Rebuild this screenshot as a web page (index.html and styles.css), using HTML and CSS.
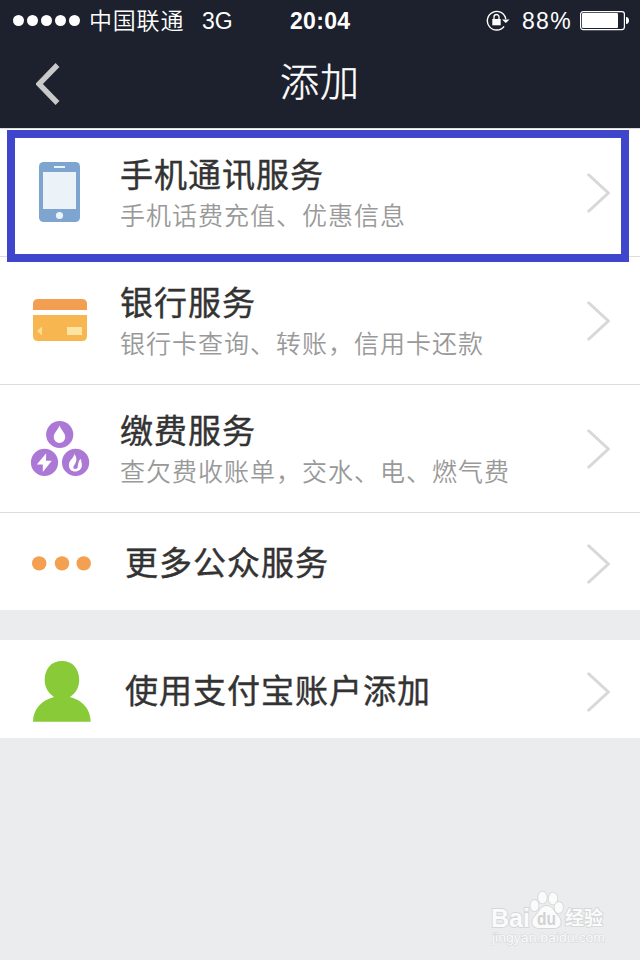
FILE: index.html
```html
<!DOCTYPE html>
<html lang="zh-CN">
<head>
<meta charset="utf-8">
<title>添加</title>
<link rel="stylesheet" href="styles.css">
</head>
<body>
<svg class="defs" width="0" height="0"><symbol id="chevron" viewBox="0 0 24 42"><path d="M1.8 2 22.3 21 1.8 40" fill="none" stroke="#d8d8d8" stroke-width="3"/></symbol></svg>
<div class="screen">
  <header class="header">
    <div class="status">
      <div class="signal"><i></i><i></i><i></i><i></i><i></i></div>
      <span class="carrier">中国联通</span>
      <span class="network">3G</span>
      <span class="time">20:04</span>
      <svg class="lock" width="24" height="22" viewBox="0 0 24 22"><path d="M18.1 16.300A9.300 9.300 0 1 1 19.800 9" fill="none" stroke="#fff" stroke-width="1.400"/><path d="M16 9.400h7.500L19.800 13z" fill="#fff"/><rect x="6.300" y="9" width="8.400" height="6.300" fill="#fff"/><path d="M8 9.200V7a2.500 2.500 0 0 1 5 0v2.200" fill="none" stroke="#fff" stroke-width="1.300"/></svg>
      <span class="percent">88%</span>
      <svg class="battery" width="50" height="20" viewBox="0 0 50 20"><rect x=".6" y=".6" width="43.800" height="18" rx="2.500" fill="none" stroke="#fff" stroke-width="1.200"/><rect x="2" y="2" width="36" height="15" rx="1" fill="#fff"/><path d="M46 6c4 0 4 7 0 7z" fill="#fff"/></svg>
    </div>
    <nav class="nav">
      <svg class="back" width="24" height="42" viewBox="0 0 24 42"><path d="M21.500 2 3 21 21.500 40" fill="none" stroke="#c9c9c9" stroke-width="5.400"/></svg>
      <h1>添加</h1>
    </nav>
  </header>
  <main>
    <section class="row featured">
      <svg class="icon" width="64" height="64" viewBox="0 0 64 64"><rect x="11" y="2" width="41" height="60" rx="4.500" fill="#7da5cf"/><rect x="15" y="12" width="33" height="37" fill="#ebf3f8"/><rect x="26" y="6" width="11" height="2" fill="#ebf3f8"/><circle cx="31.500" cy="55.500" r="3.600" fill="#ebf3f8"/></svg>
      <div class="copy"><h2>手机通讯服务</h2><p>手机话费充值、优惠信息</p></div>
      <svg class="arrow"><use href="#chevron"/></svg>
    </section>
    <section class="row">
      <svg class="icon" width="64" height="64" viewBox="0 0 64 64"><path d="M5 22v-6q0-5 5-5h44q5 0 5 5v6z" fill="#f29f51"/><path d="M5 27h54v21q0 5-5 5H10q-5 0-5-5z" fill="#f7b650"/><path d="m9 43 5-4.500v9z" fill="#fbdd94"/><rect x="39" y="39" width="15" height="8" fill="#fde4a2"/></svg>
      <div class="copy"><h2>银行服务</h2><p>银行卡查询、转账，信用卡还款</p></div>
      <svg class="arrow"><use href="#chevron"/></svg>
    </section>
    <section class="row">
      <svg class="icon" width="64" height="64" viewBox="0 0 64 64"><g fill="#ab78d6"><circle cx="31.700" cy="18.500" r="13.600"/><circle cx="16.500" cy="46.400" r="13.600"/><circle cx="47.600" cy="46.400" r="13.600"/></g><g fill="#fff"><path d="M31.500 9.500c2 5.300 5.800 7.300 5.800 11.600a5.800 5.800 0 0 1-11.600 0c0-4.300 3.800-6.300 5.800-11.600z"/><path d="M18.200 37.200 8.800 48.400h6v7.600l9-11.200h-5.800z"/><path d="M46.400 37.500c-.5 5-5.500 6.500-5.500 11.500 0 4.500 3 6.500 6 6.500 4 0 7-2.500 7-6.500 0-2.500-1-3.500-.8-6-3 1-2.300 4.500-3.300 6.500.5 2-.8 3.500-2.500 3.500-2 0-2.500-1.800-1.300-3.500 3-4 3.400-8-.1-12z"/></g></svg>
      <div class="copy"><h2>缴费服务</h2><p>查欠费收账单，交水、电、燃气费</p></div>
      <svg class="arrow"><use href="#chevron"/></svg>
    </section>
    <section class="row compact">
      <svg class="icon" width="64" height="64" viewBox="0 0 64 64" fill="#f3a051"><circle cx="11.200" cy="33.400" r="7.200"/><circle cx="34" cy="33.400" r="7.200"/><circle cx="55.700" cy="33.400" r="7.200"/></svg>
      <h2>更多公众服务</h2>
      <svg class="arrow"><use href="#chevron"/></svg>
    </section>
    <section class="row compact account">
      <svg class="icon" width="64" height="64" viewBox="0 0 64 64" fill="#89ca39"><path d="M34 3c11 0 17.200 8 17.200 19 0 8-4 13.500-9.200 17C54 42 62.700 51 62.700 63.800H5C5 51 14 42 26 39c-5-3.500-9.300-9-9.300-17C16.700 11 23 3 34 3z"/></svg>
      <h2>使用支付宝账户添加</h2>
      <svg class="arrow"><use href="#chevron"/></svg>
    </section>
  </main>
  <svg class="watermark" width="124" height="64" viewBox="0 0 124 64">
    <g fill="#fafbfb" stroke="#d6d7d8" stroke-width="1.800" paint-order="stroke">
      <ellipse cx="47.500" cy="19.500" rx="4" ry="5.500"/><ellipse cx="55.500" cy="11.500" rx="4.300" ry="5.900"/><ellipse cx="66" cy="12.500" rx="4.300" ry="5.900"/><ellipse cx="71.800" cy="21.500" rx="4.200" ry="5.500"/>
      <path d="M59.500 20c6 0 7.500 6 11 9.500 5.500 5.500 3.500 12.500-3 12.500H52c-7 0-9-7-3.500-12.500 4-3.500 5-9.500 11-9.500z"/>
      <text class="wm-brand" x="4" y="41" textLength="39" lengthAdjust="spacingAndGlyphs">Bai</text>
      <text class="wm-cjk" x="78" y="39" textLength="38">经验</text>
      <text class="wm-url" x="5" y="56" textLength="113" lengthAdjust="spacingAndGlyphs">jingyan.baidu.com</text>
    </g>
    <text class="wm-du" x="50" y="39" textLength="19" lengthAdjust="spacingAndGlyphs">du</text>
  </svg>
</div>
</body>
</html>
```
FILE: styles.css
```css
*, *::after { box-sizing: border-box; }
body { margin: 0; font-family: "Noto Sans CJK SC", sans-serif; }
h1, h2, p { margin: 0; font-weight: 400; white-space: nowrap; }
svg { display: block; flex: none; }
.defs { position: absolute; }
.screen { position: relative; width: 640px; height: 960px; background: #ebecee; overflow: hidden; }
.header { height: 128px; background: #1c212d; color: #fff; }
.status { display: flex; align-items: center; height: 40px; padding: 1px 0 0 13px; font-size: 24px; line-height: 40px; }
.signal { display: flex; gap: 3px; width: 76px; }
.signal i { width: 11px; height: 11px; border-radius: 50%; background: #fff; }
.carrier { width: 113px; margin-top: -3px; font-size: 23px; letter-spacing: .8px; font-weight: 350; white-space: nowrap; }
.network { width: 88px; font-family: "Liberation Sans", sans-serif; font-size: 23px; }
.time { width: 196px; font-family: "Liberation Sans", sans-serif; font-size: 23px; font-weight: 700; letter-spacing: .3px; }
.lock { margin: 0 12px 0 0; }
.percent { width: 58px; font-family: "Liberation Sans", sans-serif; font-size: 23px; letter-spacing: 1.3px; }
.nav { display: grid; grid-template-columns: 100px 1fr 100px; align-items: center; height: 88px; }
.back { margin: 0 0 0 36px; }
.nav h1 { font-size: 39px; line-height: 78px; letter-spacing: 1px; font-weight: 300; -webkit-text-stroke: .4px #fff; text-align: center; padding-bottom: 10px; }
.row { display: flex; align-items: center; height: 128px; padding: 0 30px 2px 28px; background: #fff; border-bottom: 1px solid #dcdcdc; }
.row h2 { color: #333; font-size: 33px; line-height: 44px; letter-spacing: 1px; -webkit-text-stroke: .4px #333; }
.copy { width: 466px; margin-left: 28px; }
.copy p { color: #999; font-size: 25px; line-height: 38px; letter-spacing: 1px; font-weight: 350; }
.arrow { width: 24px; height: 42px; margin: 3px 0 0; }
.featured { position: relative; height: 129px; border-top: 1px solid #dcdcdc; }
.featured::after { content: ""; position: absolute; left: 7px; top: 1px; width: 622px; height: 132px; border: 8px solid #4046cc; }
.compact { height: 97px; padding-bottom: 0; border: 0; }
.compact h2 { width: 461px; margin: -2px 0 0 33px; }
.compact .arrow { margin-top: 5px; }
.account { height: 98px; margin-top: 30px; padding-top: 1px; }
.account h2 { margin-top: -1px; }
.watermark { position: absolute; left: 487px; top: 886px; }
.wm-brand { font: 700 25px "Liberation Sans", sans-serif; }
.wm-cjk { font: 700 19px "Noto Sans CJK SC", sans-serif; }
.wm-url { font: 13px "Liberation Sans", sans-serif; stroke-width: 1px; }
.wm-du { font: 700 18px "Liberation Sans", sans-serif; fill: #d0d2d3; }
```
